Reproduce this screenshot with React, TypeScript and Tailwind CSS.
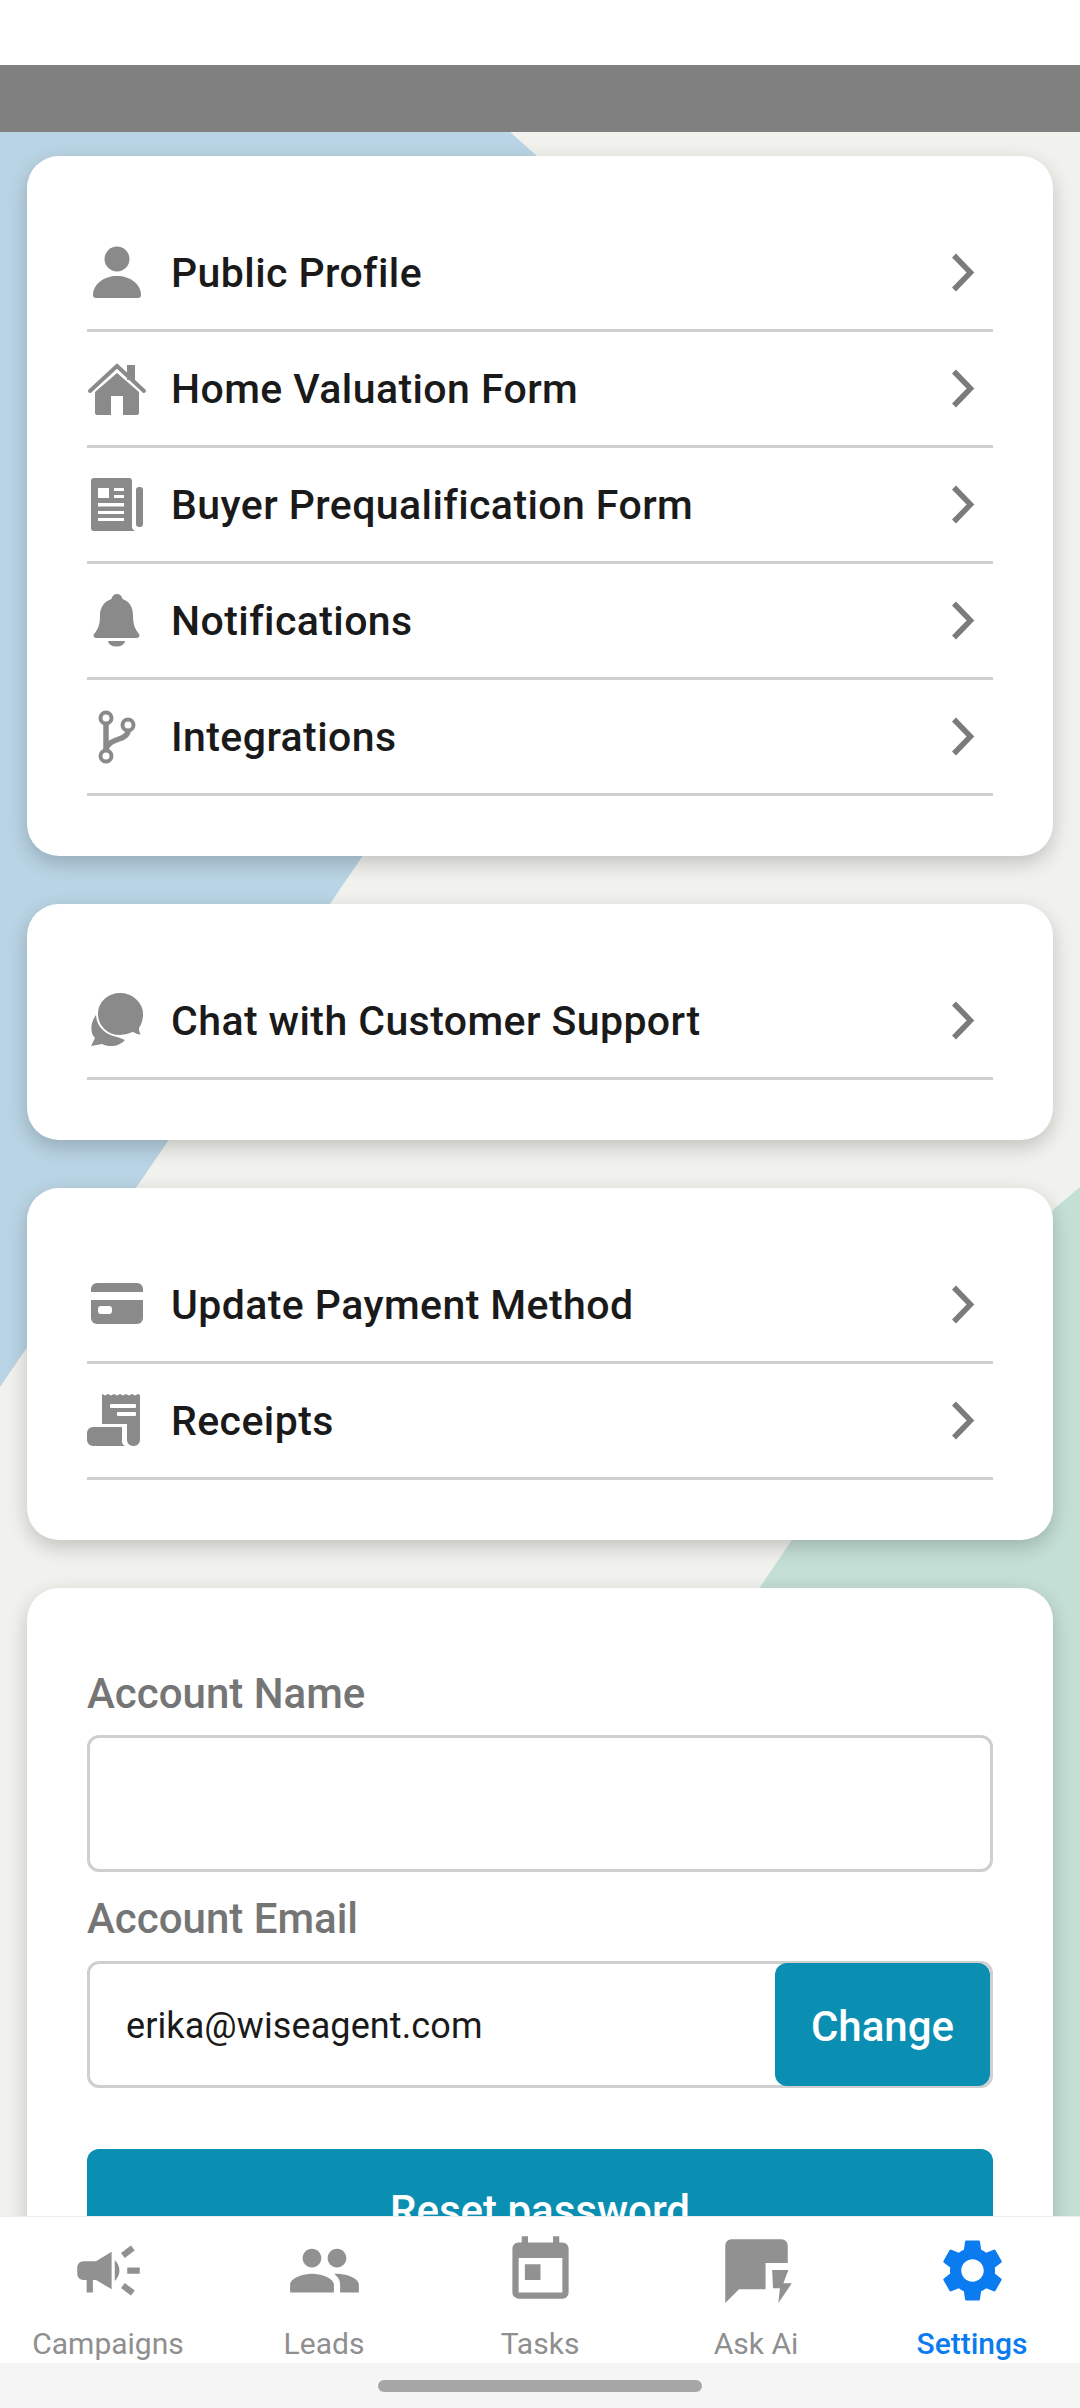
import { MdCampaign, MdPeople, MdToday, MdSettings } from "react-icons/md";
import type { ReactNode } from "react";

const G = "#8a8a8a";

function Chevron() {
  return (
    <svg width="24" height="40" viewBox="0 0 24 40" className="shrink-0">
      <path d="M3 2.500 L19.500 19.500 L3 36.500" fill="none" stroke="#7b7b7b" strokeWidth="5.500" />
    </svg>
  );
}

function Icon({ children }: { children: ReactNode }) {
  return (
    <svg width="60" height="60" viewBox="0 0 60 60" fill={G} className="shrink-0">
      {children}
    </svg>
  );
}

const PersonIcon = () => (
  <Icon>
    <circle cx="30" cy="16" r="12.5" />
    <path d="M6 52C6 41 17 33 30 33S54 41 54 52a3 3 0 0 1-3 3H9a3 3 0 0 1-3-3Z" />
  </Icon>
);

const HomeIcon = () => (
  <Icon>
    <rect x="40" y="6" width="8" height="15" />
    <path d="M3 32 30 7l27 25" fill="none" stroke={G} strokeWidth="4" strokeLinecap="round" />
    <path d="M8 33 30 14l22 19v21a2 2 0 0 1-2 2H36V37H24v19H10a2 2 0 0 1-2-2Z" />
  </Icon>
);

const NewsIcon = () => (
  <Icon>
    <path d="M7 3h35a3 3 0 0 1 3 3v46c0 2 2 4 4 4H7a3 3 0 0 1-3-3V6a3 3 0 0 1 3-3Z" />
    <rect x="49" y="12" width="7" height="40" rx="3" />
    <g fill="#fff">
      <rect x="11" y="13" width="11" height="10" />
      <rect x="27" y="13" width="10" height="3" />
      <rect x="27" y="20" width="10" height="3" />
      <rect x="11" y="28" width="26" height="3.5" />
      <rect x="11" y="36" width="26" height="3" />
      <rect x="11" y="43" width="26" height="3" />
    </g>
  </Icon>
);

const BellIcon = () => (
  <Icon>
    <path d="M30 3c3 0 5 2 5.500 5C42 10 46 16 46 24c0 10 2 14 6 19a2.500 2.500 0 0 1-2 4H9a2.500 2.500 0 0 1-2-4c4-5 6-9 6-19 0-8 5-14 11.500-16C25 5 27 3 30 3Z" />
    <path d="M21 50h17a8.500 5.500 0 0 1-17 0Z" />
  </Icon>
);

const BranchIcon = () => (
  <Icon>
    <g fill="none" stroke={G}>
      <path d="M19 17v26" strokeWidth="5.500" />
      <path d="M19 42c2-6 7-8 13-10 6-2 9-4 9-8" strokeWidth="5.500" />
      <circle cx="19" cy="11" r="5.500" strokeWidth="4" />
      <circle cx="41" cy="18" r="5.500" strokeWidth="4" />
      <circle cx="19" cy="49" r="5.500" strokeWidth="4" />
    </g>
  </Icon>
);

const ChatIcon = () => (
  <Icon>
    <path d="M9 24C3 32 3 42 8 47l-4 8 11-2c8 4 18 2 23-4L20 42Z" />
    <path
      d="M33 1C21 1 10 10 10 23s11 22 23 22c5 0 9-1 13-3 3 2 7 3 10 3-2-2-3-5-3-8 3-4 4-9 4-14C57 10 45 1 33 1Z"
      stroke="#fff"
      strokeWidth="2"
    />
  </Icon>
);

const CardIcon = () => (
  <Icon>
    <rect x="4" y="8" width="52" height="41" rx="6" />
    <rect x="4" y="17" width="52" height="8" fill="#fff" />
    <rect x="11" y="31" width="14" height="8" rx="3" fill="#fff" />
  </Icon>
);

const ReceiptIcon = () => (
  <Icon>
    <path d="M15 3l3 1.500 3-1.500 3 1.500 3-1.500 3 1.500 3-1.500 3 1.500 3-1.500 3 1.500 3-1.500 3 1.500 3-1.500 2 1V49a6 6 0 0 1-6 6H20L15 34Z" />
    <rect x="23" y="13" width="26" height="4" rx="1" fill="#fff" />
    <rect x="30" y="21" width="19" height="4" rx="1" fill="#fff" />
    <path d="M0 33h40v16a6 6 0 0 0 6 6H0Z" fill="#fff" />
    <path d="M6 36h29v13a6 6 0 0 0 3 6H6a6 6 0 0 1-6-6v-7a6 6 0 0 1 6-6Z" />
  </Icon>
);

function AskAiIcon() {
  return (
    <svg width="75" height="75" viewBox="0 0 24 24" fill="#919191">
      <path d="M2 22.400V4a2 2 0 0 1 2-2h16a2 2 0 0 1 2 2v5.600h-7.100V18H6.400Z" />
      <path d="M17 11.800h5.200l-1.600 4.300h2.700L19 22.400l.5-4.700h-2.200Z" />
    </svg>
  );
}

function Row({ icon, label }: { icon: ReactNode; label: string }) {
  return (
    <div className="flex h-[116px] items-center border-b-[3px] border-[#cfcfcf] pr-[18px]">
      {icon}
      <span className="ml-[24px] flex-1 pt-[3px] text-[41px] font-medium tracking-[0.42px] text-[#1a1a1a]">{label}</span>
      <Chevron />
    </div>
  );
}

function Card({ children }: { children: ReactNode }) {
  return (
    <div className="rounded-[32px] bg-white px-[60px] py-[60px] shadow-[0_7px_20px_rgba(0,0,0,0.2)]">{children}</div>
  );
}

const tabs = [
  { label: "Campaigns", icon: <MdCampaign size={75} color="#919191" /> },
  { label: "Leads", icon: <MdPeople size={75} color="#919191" /> },
  { label: "Tasks", icon: <MdToday size={75} color="#919191" /> },
  { label: "Ask Ai", icon: <AskAiIcon /> },
  { label: "Settings", icon: <MdSettings size={75} color="#0a7cf0" />, active: true },
];

export default function App() {
  return (
    <div className="flex h-[2408px] w-[1080px] flex-col overflow-hidden bg-white font-['Roboto',sans-serif]">
      <div className="h-[65px] shrink-0 bg-white" />
      <div className="h-[67px] shrink-0 bg-[#808080]" />

      <main className="relative min-h-0 flex-1 overflow-hidden bg-[#f1f2ed]">
        {/* background shapes */}
        <svg className="absolute inset-0 h-full w-full" viewBox="0 0 1080 2084" preserveAspectRatio="none">
          <polygon points="0,0 510,0 726,192 0,1255" fill="#b9d4e4" />
          <polygon points="1080,1055 1055,1076 792,1408 760,1455 600,1700 760,2084 1080,2084" fill="#c4dfd5" />
        </svg>

        <div className="relative flex flex-col gap-[48px] px-[27px] pt-[24px]">
          <Card>
            <Row icon={<PersonIcon />} label="Public Profile" />
            <Row icon={<HomeIcon />} label="Home Valuation Form" />
            <Row icon={<NewsIcon />} label="Buyer Prequalification Form" />
            <Row icon={<BellIcon />} label="Notifications" />
            <Row icon={<BranchIcon />} label="Integrations" />
          </Card>
          <Card>
            <Row icon={<ChatIcon />} label="Chat with Customer Support" />
          </Card>
          <Card>
            <Row icon={<CardIcon />} label="Update Payment Method" />
            <Row icon={<ReceiptIcon />} label="Receipts" />
          </Card>
          <Card>
            <div className="flex h-[87px] items-end pb-[17px] text-[42px] font-medium leading-[48px] text-[#757575]">
              Account Name
            </div>
            <div className="h-[137px] rounded-[12px] border-[3px] border-[#cfcfcf] bg-white" />
            <div className="flex h-[89px] items-center pt-[4px] text-[42px] font-medium leading-[48px] text-[#757575]">
              Account Email
            </div>
            <div className="flex h-[127px] items-center justify-between rounded-[12px] border-[3px] border-[#cfcfcf] bg-white">
              <span className="pl-[36px] pt-[3px] text-[36px] tracking-[0.1px] text-[#1a1a1a]">erika@wiseagent.com</span>
              <button className="flex h-[123px] w-[215px] items-center justify-center rounded-[12px] bg-[#0a8fb3] pt-[3px] text-[42px] font-medium text-white">
                Change
              </button>
            </div>
            <button className="mt-[61px] h-[120px] w-full rounded-[12px] bg-[#0a8fb3] pt-[3px] text-[42px] font-medium text-white">
              Reset password
            </button>
          </Card>
        </div>
      </main>

      <nav className="grid h-[147px] shrink-0 grid-cols-5 border-t-[1px] border-[#ececec] bg-white">
        {tabs.map((t) => (
          <div key={t.label} className="flex flex-col items-center pt-[16px]">
            {t.icon}
            <span className={`mt-[19px] text-[30px] leading-[34px] ${t.active ? "font-medium text-[#0a7cf0]" : "text-[#8f8f8f]"}`}>
              {t.label}
            </span>
          </div>
        ))}
      </nav>
      <div className="flex h-[45px] shrink-0 justify-center bg-[#f5f5f5] pt-[17px]">
        <div className="h-[12px] w-[324px] rounded-full bg-[#a6a6a6]" />
      </div>
    </div>
  );
}
